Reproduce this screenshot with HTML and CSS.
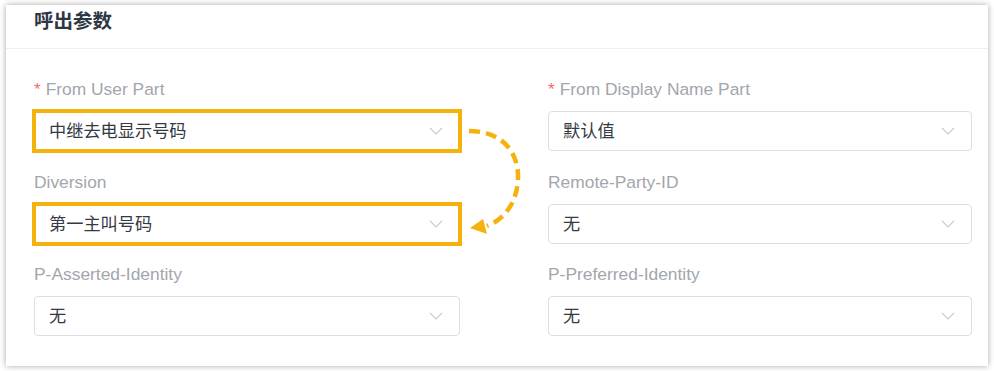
FILE: index.html
```html
<!DOCTYPE html>
<html lang="zh-CN">
<head>
  <meta charset="UTF-8">
  <meta name="viewport" content="width=device-width, initial-scale=1.0">
  <title>呼出参数</title>
  <link rel="stylesheet" href="styles.css">
</head>
<body>
  <div class="card">
    <div class="card-header">
      <h2>呼出参数</h2>
    </div>
    <div class="form-grid">
      <div class="form-item">
        <label class="required">From User Part</label>
        <div class="select highlight">
          <span>中继去电显示号码</span>
          <svg class="chevron" viewBox="0 0 14 8"><path d="M1 1 L7 7 L13 1" /></svg>
        </div>
      </div>
      <div class="form-item">
        <label class="required">From Display Name Part</label>
        <div class="select">
          <span>默认值</span>
          <svg class="chevron" viewBox="0 0 14 8"><path d="M1 1 L7 7 L13 1" /></svg>
        </div>
      </div>
      <div class="form-item">
        <label>Diversion</label>
        <div class="select highlight">
          <span>第一主叫号码</span>
          <svg class="chevron" viewBox="0 0 14 8"><path d="M1 1 L7 7 L13 1" /></svg>
        </div>
      </div>
      <div class="form-item">
        <label>Remote-Party-ID</label>
        <div class="select">
          <span>无</span>
          <svg class="chevron" viewBox="0 0 14 8"><path d="M1 1 L7 7 L13 1" /></svg>
        </div>
      </div>
      <div class="form-item">
        <label>P-Asserted-Identity</label>
        <div class="select">
          <span>无</span>
          <svg class="chevron" viewBox="0 0 14 8"><path d="M1 1 L7 7 L13 1" /></svg>
        </div>
      </div>
      <div class="form-item">
        <label>P-Preferred-Identity</label>
        <div class="select">
          <span>无</span>
          <svg class="chevron" viewBox="0 0 14 8"><path d="M1 1 L7 7 L13 1" /></svg>
        </div>
      </div>

      <!-- annotation arrow: From User Part -> Diversion -->
      <svg class="arrow" viewBox="0 0 70 120" width="70" height="120">
        <path class="arrow-line" d="M8 11 C42 11 58 33 57 59 C56 84 42 100 26 106" />
        <polygon class="arrow-head" points="9,108 22,99 26,114" />
      </svg>
    </div>
  </div>
</body>
</html>
```

FILE: styles.css
```css
body {
  margin: 0;
  padding: 0;
  background-color: #ffffff;
  font-family: "Liberation Sans", "Noto Sans CJK SC", sans-serif;
}
.card {
  width: 982px;
  margin: 5px 6px;
  background-color: #ffffff;
  box-shadow: 0 0 6px rgba(0, 0, 0, 0.35);
}
.card-header {
  height: 42px;
  padding-left: 28px;
  border-bottom: 1px solid #ebeef2;
  display: flex;
  align-items: center;
  padding-bottom: 1px;
}
h2 {
  margin: 0;
  font-family: "Noto Sans CJK SC", sans-serif;
  font-size: 19.5px;
  font-weight: 700;
  color: #2f3744;
  line-height: 1;
  margin-top: -12px;
}
.form-grid {
  position: relative;
  display: grid;
  grid-template-columns: 426px 424px;
  column-gap: 88px;
  padding: 29px 16px 10px 28px;
}
.form-item {
  margin-bottom: 19.5px;
}
.form-item label {
  display: block;
  height: 22px;
  line-height: 22px;
  font-size: 17.4px;
  color: #a2a6ad;
  margin-bottom: 11px;
}
.form-item label.required::before {
  content: "*";
  color: #f56c6c;
  margin-right: 5px;
  font-size: 17px;
}
.select {
  box-sizing: border-box;
  height: 40px;
  border: 1px solid #dcdfe6;
  border-radius: 4px;
  display: flex;
  align-items: center;
  justify-content: space-between;
  padding: 0 16px 3px 14px;
  font-family: "Noto Sans CJK SC", sans-serif;
  font-size: 17.2px;
  color: #333a44;
}
.select .chevron {
  margin-top: 3px;
}
.select.highlight {
  border-radius: 0;
  border-color: #f5b10c;
  outline: 4px solid #f5b10c;
  outline-offset: -2px;
}
.chevron {
  width: 14px;
  height: 8px;
  fill: none;
  stroke: #c8cbd1;
  stroke-width: 1.2;
}
.arrow {
  position: absolute;
  left: 455px;
  top: 71px;
}
.arrow-line {
  fill: none;
  stroke: #f5b10c;
  stroke-width: 4.5;
  stroke-dasharray: 11 6;
}
.arrow-head {
  fill: #f5b10c;
}
```
